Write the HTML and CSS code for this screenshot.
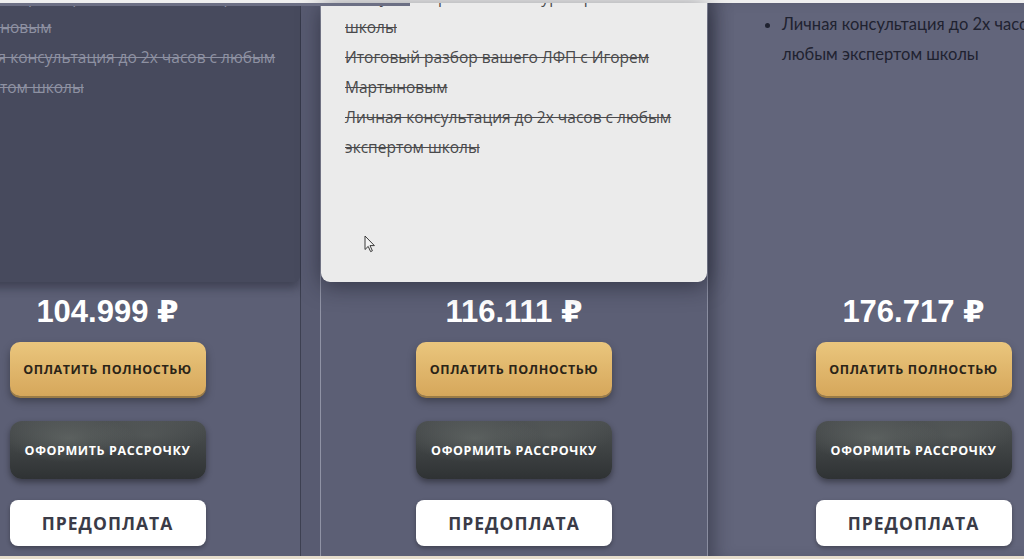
FILE: index.html
```html
<!DOCTYPE html>
<html lang="ru">

<head>
    <meta charset="UTF-8">
    <meta name="viewport" content="width=device-width, initial-scale=1.0">
    <title>Тарифы</title>
    <link rel="stylesheet" href="styles.css">
</head>

<body>
    <div class="topline"></div>
    <div class="progress"></div>

    <div class="slider">

        <section class="plan plan--start">
            <div class="card card--dark">
                <ul class="perks perks--off perks--start">
                    <li>Итоговый разбор вашего ЛФП с Игорем Мартыновым</li>
                    <li>Личная консультация до 2х часов с любым экспертом школы</li>
                </ul>
            </div>
            <div class="price">104.999 ₽</div>
            <a href="#" class="btn btn--gold">Оплатить полностью</a>
            <a href="#" class="btn btn--dark">Оформить рассрочку</a>
            <a href="#" class="btn btn--white">Предоплата</a>
        </section>

        <div class="gutter"></div>

        <section class="plan plan--mid">
            <div class="card card--light">
                <ul class="perks perks--off perks--mid">
                    <li>Доступ в закрытый чат с кураторами<br>школы</li>
                    <li>Итоговый разбор вашего ЛФП с Игорем Мартыновым</li>
                    <li>Личная консультация до 2х часов с любым экспертом школы</li>
                </ul>
            </div>
            <div class="price">116.111 ₽</div>
            <a href="#" class="btn btn--gold">Оплатить полностью</a>
            <a href="#" class="btn btn--dark">Оформить рассрочку</a>
            <a href="#" class="btn btn--white">Предоплата</a>
        </section>

        <section class="plan plan--top">
            <div class="card card--plain">
                <ul class="perks perks--on">
                    <li>Итоговый разбор ЛФП</li>
                    <li>Личная консультация до 2х часов с любым экспертом школы</li>
                </ul>
            </div>
            <div class="price">176.717 ₽</div>
            <a href="#" class="btn btn--gold">Оплатить полностью</a>
            <a href="#" class="btn btn--dark">Оформить рассрочку</a>
            <a href="#" class="btn btn--white">Предоплата</a>
        </section>

    </div>

    <div class="bottomline"></div>

    <!-- mouse pointer -->
    <svg class="pointer" width="12" height="18" viewBox="0 0 12 18">
        <path d="M1 1 L1 14.5 L4.2 11.4 L6.6 16.6 L8.4 15.8 L6 10.6 L10.4 10.6 Z" fill="#f4f4f4" stroke="#3a3a3a" stroke-width="1" stroke-linejoin="round" />
    </svg>
</body>

</html>
```

FILE: styles.css
```css
* {
    box-sizing: border-box;
}

body {
    margin: 0;
    height: 559px;
    overflow: hidden;
    position: relative;
    display: flex;
    flex-direction: column;
    background-color: #5c5f75;
    font-family: "Open Sans", "Noto Sans", sans-serif;
}

.topline {
    flex: none;
    height: 3px;
    background-color: #efefef;
}

.progress {
    position: absolute;
    top: 3px;
    left: 0;
    width: 410px;
    height: 3px;
    background-color: #6c6f84;
    z-index: 5;
}

.bottomline {
    flex: none;
    height: 3px;
    background-color: #e6ddcc;
}

.slider {
    flex: 1;
    display: flex;
    margin-left: -85px;
    min-height: 0;
}

/* columns */
.plan {
    flex: none;
    display: flex;
    flex-direction: column;
    align-items: center;
}

.plan--start {
    width: 386px;
    border-right: 1px solid #3d4051;
}

.gutter {
    flex: none;
    width: 20px;
    background-color: #585b71;
    border-right: 1px solid #9093a5;
}

.plan--mid {
    width: 386px;
}

.plan--top {
    width: 412px;
    background-color: #62657b;
    border-left: 1px solid #8a8da0;
    box-shadow: inset 16px 0 18px -10px rgba(28, 30, 44, 0.45);
}

/* cards */
.card {
    align-self: stretch;
    height: 279px;
    overflow: hidden;
    padding: 0 24px;
}

.card--dark {
    height: 276px;
    margin: 3px 0 0 10px;
    background-color: #474a5d;
    border-radius: 0 0 6px 6px;
    box-shadow: 0 6px 10px rgba(28, 30, 44, 0.45);
}

.card--light {
    position: relative;
    z-index: 2;
    background-color: #ebebeb;
    border-radius: 0 0 9px 9px;
    box-shadow: 0 4px 22px rgba(20, 22, 34, 0.55);
}

.card--plain {
    padding: 0 28px 0 50px;
}

.perks {
    margin: 0;
    padding: 0;
    list-style: none;
    font-size: 15.5px;
    line-height: 30px;
}

.perks--off li {
    text-decoration: line-through;
}

.perks--start {
    margin-top: -24px;
    color: #8e91a2;
}

.perks--mid {
    margin-top: -21px;
    color: #4a4a4c;
}

.perks--on {
    margin-top: -24px;
    padding-left: 24px;
    list-style: disc;
    font-family: Lato, "Open Sans", sans-serif;
    font-size: 16.5px;
    color: #1f2230;
}

/* price + buttons */
.price {
    margin-top: 12px;
    font: 700 31px/36px "Liberation Sans", Arial, "DejaVu Sans", sans-serif;
    color: #ffffff;
}

.btn {
    width: 196px;
    display: flex;
    align-items: center;
    justify-content: center;
    font-weight: 700;
    text-transform: uppercase;
    text-decoration: none;
}

.btn--gold {
    height: 54px;
    margin-top: 12px;
    border-radius: 10px;
    background: linear-gradient(#eac67d, #d6a75b);
    color: #2b2418;
    font-size: 12.5px;
    letter-spacing: 0.6px;
    box-shadow: 0 2px 0 #9a7b46, 0 5px 8px rgba(0, 0, 0, 0.35);
}

/* chalky dark texture */
.btn--dark {
    height: 58px;
    margin-top: 25px;
    border-radius: 12px;
    background:
        radial-gradient(ellipse 45% 55% at 30% 30%, rgba(120, 126, 122, 0.45), transparent 75%),
        radial-gradient(ellipse 40% 50% at 70% 25%, rgba(105, 110, 108, 0.35), transparent 75%),
        linear-gradient(180deg, #4d5152, #3b3f40 60%, #2f3234);
    color: #ffffff;
    font-size: 12.5px;
    letter-spacing: 0.6px;
    box-shadow: 0 3px 6px rgba(0, 0, 0, 0.4);
}

.btn--white {
    height: 46px;
    margin-top: 21px;
    border-radius: 8px;
    background-color: #ffffff;
    color: #3a3b47;
    font-size: 17.5px;
    letter-spacing: 1px;
    box-shadow: 0 2px 4px rgba(0, 0, 0, 0.3);
}

.pointer {
    position: absolute;
    left: 364px;
    top: 235px;
    z-index: 6;
}
```
